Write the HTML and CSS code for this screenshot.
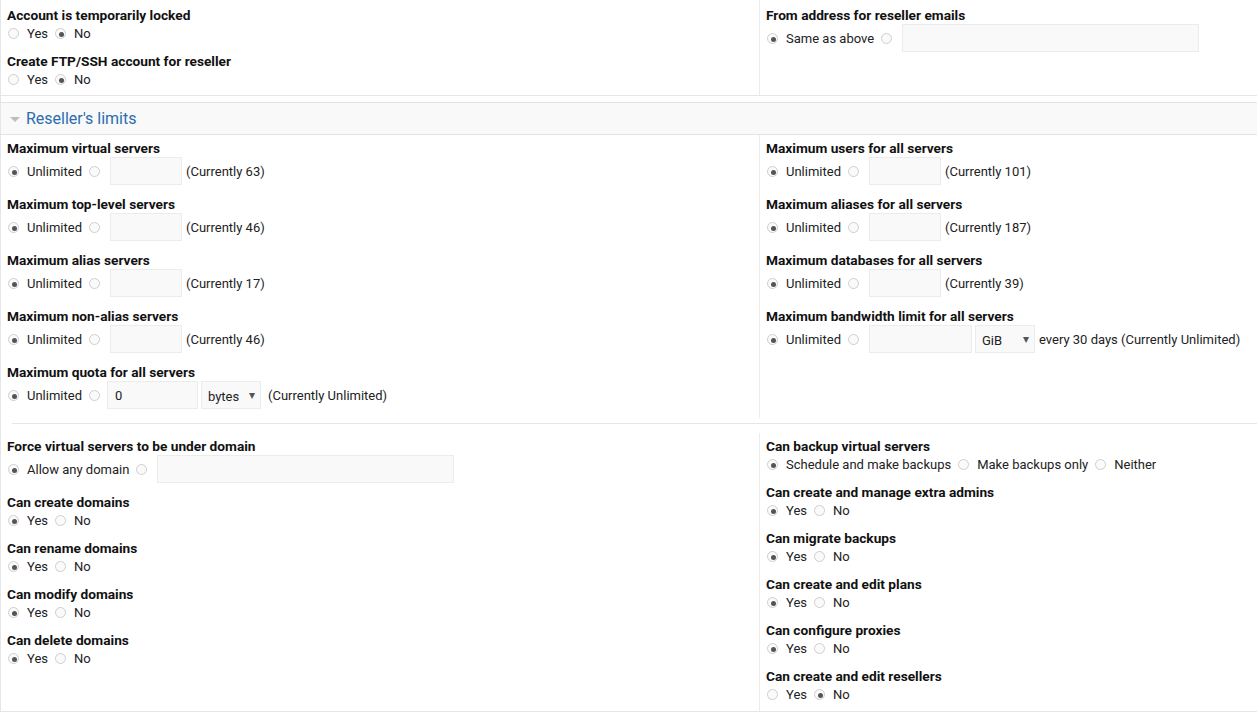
FILE: index.html
```html
<!DOCTYPE html>
<html>
<head>
    <meta charset="utf-8">
    <title>Reseller settings</title>
    <link rel="stylesheet" href="styles.css">
</head>
<body>

<div class="panel">

    <!-- account options -->
    <div class="cols top">
        <div class="col">
            <div class="field">
                <div class="lbl">Account is temporarily locked</div>
                <div class="opts">
                    <label><input type="radio" name="lock">Yes</label>
                    <label><input type="radio" name="lock" checked>No</label>
                </div>
            </div>
            <div class="field">
                <div class="lbl">Create FTP/SSH account for reseller</div>
                <div class="opts">
                    <label><input type="radio" name="ftp">Yes</label>
                    <label><input type="radio" name="ftp" checked>No</label>
                </div>
            </div>
        </div>
        <div class="col">
            <div class="field big">
                <div class="lbl">From address for reseller emails</div>
                <div class="opts">
                    <label><input type="radio" name="from" checked>Same as above</label>
                    <label class="solo"><input type="radio" name="from"></label>
                    <input type="text" class="txt wide">
                </div>
            </div>
        </div>
    </div>

    <!-- section header -->
    <div class="section-head">
        <span class="caret"></span>Reseller's limits
    </div>

    <div class="cols limits">
        <div class="col">
            <div class="field big">
                <div class="lbl">Maximum virtual servers</div>
                <div class="opts">
                    <label><input type="radio" name="mv" checked>Unlimited</label>
                    <label class="solo"><input type="radio" name="mv"></label>
                    <input type="text" class="txt num">
                    <span class="note">(Currently 63)</span>
                </div>
            </div>
            <div class="field big">
                <div class="lbl">Maximum top-level servers</div>
                <div class="opts">
                    <label><input type="radio" name="mt" checked>Unlimited</label>
                    <label class="solo"><input type="radio" name="mt"></label>
                    <input type="text" class="txt num">
                    <span class="note">(Currently 46)</span>
                </div>
            </div>
            <div class="field big">
                <div class="lbl">Maximum alias servers</div>
                <div class="opts">
                    <label><input type="radio" name="ma" checked>Unlimited</label>
                    <label class="solo"><input type="radio" name="ma"></label>
                    <input type="text" class="txt num">
                    <span class="note">(Currently 17)</span>
                </div>
            </div>
            <div class="field big">
                <div class="lbl">Maximum non-alias servers</div>
                <div class="opts">
                    <label><input type="radio" name="mn" checked>Unlimited</label>
                    <label class="solo"><input type="radio" name="mn"></label>
                    <input type="text" class="txt num">
                    <span class="note">(Currently 46)</span>
                </div>
            </div>
            <div class="field big">
                <div class="lbl">Maximum quota for all servers</div>
                <div class="opts">
                    <label><input type="radio" name="mq" checked>Unlimited</label>
                    <label class="solo"><input type="radio" name="mq"></label>
                    <input type="text" class="txt quota" value="0">
                    <span class="sel bytes"><select><option>bytes</option></select></span>
                    <span class="note">(Currently Unlimited)</span>
                </div>
            </div>
        </div>
        <div class="col">
            <div class="field big">
                <div class="lbl">Maximum users for all servers</div>
                <div class="opts">
                    <label><input type="radio" name="mu" checked>Unlimited</label>
                    <label class="solo"><input type="radio" name="mu"></label>
                    <input type="text" class="txt num">
                    <span class="note">(Currently 101)</span>
                </div>
            </div>
            <div class="field big">
                <div class="lbl">Maximum aliases for all servers</div>
                <div class="opts">
                    <label><input type="radio" name="mal" checked>Unlimited</label>
                    <label class="solo"><input type="radio" name="mal"></label>
                    <input type="text" class="txt num">
                    <span class="note">(Currently 187)</span>
                </div>
            </div>
            <div class="field big">
                <div class="lbl">Maximum databases for all servers</div>
                <div class="opts">
                    <label><input type="radio" name="md" checked>Unlimited</label>
                    <label class="solo"><input type="radio" name="md"></label>
                    <input type="text" class="txt num">
                    <span class="note">(Currently 39)</span>
                </div>
            </div>
            <div class="field big">
                <div class="lbl">Maximum bandwidth limit for all servers</div>
                <div class="opts">
                    <label><input type="radio" name="mb" checked>Unlimited</label>
                    <label class="solo"><input type="radio" name="mb"></label>
                    <input type="text" class="txt bw">
                    <span class="sel gib"><select><option>GiB</option></select></span>
                    <span class="note">every 30 days (Currently Unlimited)</span>
                </div>
            </div>
        </div>
    </div>

    <div class="rule"><hr></div>

    <!-- capabilities -->
    <div class="cols bottom">
        <div class="col">
            <div class="field big">
                <div class="lbl">Force virtual servers to be under domain</div>
                <div class="opts">
                    <label><input type="radio" name="fd" checked>Allow any domain</label>
                    <label class="solo"><input type="radio" name="fd"></label>
                    <input type="text" class="txt wide">
                </div>
            </div>
            <div class="field">
                <div class="lbl">Can create domains</div>
                <div class="opts">
                    <label><input type="radio" name="cd" checked>Yes</label>
                    <label><input type="radio" name="cd">No</label>
                </div>
            </div>
            <div class="field">
                <div class="lbl">Can rename domains</div>
                <div class="opts">
                    <label><input type="radio" name="rd" checked>Yes</label>
                    <label><input type="radio" name="rd">No</label>
                </div>
            </div>
            <div class="field">
                <div class="lbl">Can modify domains</div>
                <div class="opts">
                    <label><input type="radio" name="md2" checked>Yes</label>
                    <label><input type="radio" name="md2">No</label>
                </div>
            </div>
            <div class="field">
                <div class="lbl">Can delete domains</div>
                <div class="opts">
                    <label><input type="radio" name="dd" checked>Yes</label>
                    <label><input type="radio" name="dd">No</label>
                </div>
            </div>
        </div>
        <div class="col">
            <div class="field">
                <div class="lbl">Can backup virtual servers</div>
                <div class="opts">
                    <label><input type="radio" name="bk" checked>Schedule and make backups</label>
                    <label><input type="radio" name="bk">Make backups only</label>
                    <label><input type="radio" name="bk">Neither</label>
                </div>
            </div>
            <div class="field">
                <div class="lbl">Can create and manage extra admins</div>
                <div class="opts">
                    <label><input type="radio" name="ea" checked>Yes</label>
                    <label><input type="radio" name="ea">No</label>
                </div>
            </div>
            <div class="field">
                <div class="lbl">Can migrate backups</div>
                <div class="opts">
                    <label><input type="radio" name="mg" checked>Yes</label>
                    <label><input type="radio" name="mg">No</label>
                </div>
            </div>
            <div class="field">
                <div class="lbl">Can create and edit plans</div>
                <div class="opts">
                    <label><input type="radio" name="pl" checked>Yes</label>
                    <label><input type="radio" name="pl">No</label>
                </div>
            </div>
            <div class="field">
                <div class="lbl">Can configure proxies</div>
                <div class="opts">
                    <label><input type="radio" name="px" checked>Yes</label>
                    <label><input type="radio" name="px">No</label>
                </div>
            </div>
            <div class="field">
                <div class="lbl">Can create and edit resellers</div>
                <div class="opts">
                    <label><input type="radio" name="rs">Yes</label>
                    <label><input type="radio" name="rs" checked>No</label>
                </div>
            </div>
        </div>
    </div>

</div>

</body>
</html>
```

FILE: styles.css
```css
/* GLOBAL THEME */
body    {   margin: 0;
            background: white;
            color: #222;
            font-family: Roboto, "Liberation Sans", Arial, sans-serif;
            font-size: 13px;
        }

/* outer frame, only a left edge shows */
.panel          { border-left: 1px solid #e6e6e6; }

/* two column rows */
.cols           { display: grid; grid-template-columns: 758px 1fr; }
.col            { padding: 0 6px 3px 6px; }
.col + .col     { border-left: 1px solid #ececec; }

.top            { border-bottom: 1px solid #e6e6e6; margin-bottom: 6px; }
.top .col       { padding-top: 2px; padding-bottom: 1px; }
.bottom         { border-bottom: 1px solid #e6e6e6; }
.bottom .col    { padding-bottom: 2px; }

/* RESELLER LIMITS header */
.section-head   {   display: flex; align-items: center;
                    height: 31px;
                    border-top: 1px solid #e3e3e3;
                    border-bottom: 1px solid #e3e3e3;
                    background: #f9f9f9;
                    color: #2a6db0;
                    font-size: 16px;
                    padding-left: 9px;
                }
.caret          {   width: 0; height: 0; margin-right: 6px; margin-top: 1px;
                    border-left: 5px solid transparent;
                    border-right: 5px solid transparent;
                    border-top: 5px solid #bdbdbd;
                }

/* one field: bold caption, then the choices */
.field          { padding: 5px 0 5px 0; }
.lbl            { font-size: 13.7px; font-weight: bold; color: #111; line-height: 16px; }
.opts           { display: flex; align-items: center; height: 20px; white-space: nowrap; }
.field.big .opts { height: 30px; }

.opts label     { display: flex; align-items: center; margin-right: 6px; }
.opts label.solo { margin-right: 0; }

/* radio buttons */
input[type=radio] {
                    appearance: none; -webkit-appearance: none;
                    width: 11px; height: 11px; margin: 0 8px 0 1px;
                    border: 1px solid #cfcfcf; border-radius: 50%;
                    background: #fafafa;
                    position: relative;
                }
input[type=radio]:checked::after {
                    content: ""; position: absolute;
                    left: 3px; top: 3px; width: 5px; height: 5px;
                    border-radius: 50%; background: #555;
                }
.solo input[type=radio] { margin-right: 0; }

/* text boxes */
.txt            {   box-sizing: border-box; height: 28px;
                    border: 1px solid #ececec; background: #f9f9f9;
                    font-family: inherit; font-size: 13px; color: #222;
                    padding: 0 7px; margin: 0 4px 0 10px;
                }
.txt.num        { width: 72px; }
.txt.wide       { width: 297px; }
.txt.quota      { width: 91px; margin-left: 7px; margin-right: 3px; }
.txt.bw         { width: 103px; margin-right: 3px; }

/* drop downs */
.sel            { position: relative; display: inline-block; margin-right: 7px; }
.sel select     {   appearance: none; -webkit-appearance: none;
                    box-sizing: border-box; height: 28px;
                    border: 1px solid #ececec; background: #f9f9f9;
                    font-family: inherit; font-size: 13px; color: #222;
                    padding: 3px 20px 0 6px;
                }
.sel::after     {   content: "\25BE"; position: absolute; right: 6px; top: 7px;
                    font-size: 12px; color: #555; pointer-events: none;
                }
.sel.bytes select { width: 60px; }
.sel.gib select   { width: 60px; }
.sel.gib        { margin-right: 4px; }

.note           { color: #222; }

/* horizontal line between limits and permissions */
.rule           { padding: 5px 0 9px 11px; }
.rule hr        { margin: 0; border: 0; border-top: 1px solid #e6e6e6; }
```
